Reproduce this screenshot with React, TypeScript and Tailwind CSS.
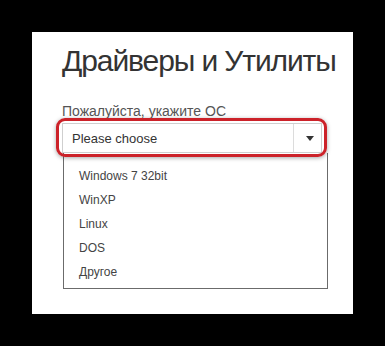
export default function App() {
  const options = ["Windows 7 32bit", "WinXP", "Linux", "DOS", "Другое"]

  return (
    <div className="w-[385px] h-[346px] bg-black pt-[32px] pl-[32px] font-['Liberation_Sans',Arial,sans-serif]">
      <div className="w-[321px] h-[282px] bg-white pt-[13px] pl-[30px]">
        <h1 className="text-[30px] leading-[32px] text-[#333] font-normal whitespace-nowrap tracking-[-1.1px]">
          Драйверы и Утилиты
        </h1>
        <p className="mt-[26px] text-[14px] leading-[16px] text-[#555] whitespace-nowrap">Пожалуйста, укажите ОС</p>

        {/* select */}
        <div className="relative mt-[4px] w-[260px]">
          <div className="h-[30px] flex items-stretch border border-[#cfcfcf] bg-white">
            <span className="flex-1 flex items-center pl-[9px] pt-[2px] text-[13px] text-[#333]">Please choose</span>
            <span className="w-[28px] border-l border-[#dcdcdc] flex items-center justify-center">
              <span className="w-0 h-0 border-l-[4px] border-r-[4px] border-t-[5px] border-l-transparent border-r-transparent border-t-[#333] ml-[4px]" />
            </span>
          </div>

          {/* options list */}
          <ul className="ml-[1px] w-[265px] border border-t-0 border-[#6b6b6b] pt-[11px] pb-[4px]">
            {options.map((o) => (
              <li key={o} className="h-[24px] flex items-center pl-[15px] text-[12px] text-[#444]">
                {o}
              </li>
            ))}
          </ul>

          {/* red highlight annotation */}
          <div className="absolute left-[-6px] top-[-5px] w-[271px] h-[39px] rounded-[9px] border-[3px] border-[#cc2229] shadow-[0_1px_4px_rgba(0,0,0,0.35)] pointer-events-none" />
        </div>
      </div>
    </div>
  )
}
